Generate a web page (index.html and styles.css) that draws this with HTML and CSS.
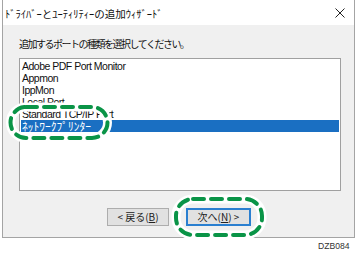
FILE: index.html
```html
<!DOCTYPE html>
<html lang="ja">
<head>
<meta charset="utf-8">
<link rel="stylesheet" href="styles.css">
</head>
<body>
<div class="page">
  <div class="window">
    <div class="titlebar">
      <span class="title">ﾄﾞﾗｲﾊﾞｰとﾕｰﾃｨﾘﾃｨｰの追加ｳｨｻﾞｰﾄﾞ</span>
      <svg class="close" width="10" height="10" viewBox="0 0 10 10"><path d="M0.5 0.5L9.5 9.5M9.5 0.5L0.5 9.5" stroke="#222" stroke-width="1"/></svg>
    </div>
    <div class="content">
      <div class="label">追加するポートの種類を選択してください。</div>
      <div class="listbox">
        <div class="item">Adobe PDF Port Monitor</div>
        <div class="item">Appmon</div>
        <div class="item">IppMon</div>
        <div class="item">Local Port</div>
        <div class="item">Standard TCP/IP Port</div>
        <div class="item selected">ﾈｯﾄﾜｰｸﾌﾟﾘﾝﾀｰ</div>
      </div>
      <div class="buttons">
        <div class="btn">&lt; 戻る(<u>B</u>)</div>
        <div class="btn primary">次へ(<u>N</u>) &gt;</div>
      </div>
    </div>
  </div>
  <div class="caption">DZB084</div>
  <svg class="marks" width="357" height="255" viewBox="0 0 357 255">
    <rect x="10.5" y="107" width="97" height="31" rx="15.5" fill="none" stroke="#fff" stroke-width="9"/>
    <rect x="10.5" y="107" width="97" height="31" rx="15.5" fill="none" stroke="#0a9447" stroke-width="4" stroke-dasharray="11 7" stroke-linecap="round"/>
    <rect x="176" y="199" width="86" height="36" rx="17" fill="none" stroke="#fff" stroke-width="9"/>
    <rect x="176" y="199" width="86" height="36" rx="17" fill="none" stroke="#0a9447" stroke-width="4" stroke-dasharray="11 7" stroke-linecap="round"/>
  </svg>
</div>
</body>
</html>
```
FILE: styles.css
```css
* { box-sizing: border-box; }
html, body { margin: 0; padding: 0; background: #fff; }
body {
  width: 357px;
  height: 255px;
  overflow: hidden;
  font-family: "Noto Sans", "Noto Sans CJK JP", sans-serif;
  color: #000;
}
.page { position: relative; width: 357px; height: 255px; }
.window {
  margin-left: 2px;
  width: 353px;
  height: 238px;
  border: 1px solid #a4a4a4;
  border-top: none;
  background: #f0f0f0;
  display: flex;
  flex-direction: column;
}
.titlebar {
  height: 25px;
  background: #fff;
  display: flex;
  align-items: center;
  justify-content: space-between;
  padding: 0 9px 0 2px;
}
.title {
  font-family: "Noto Sans CJK JP", sans-serif;
  font-size: 10.5px;
  color: #111;
  padding-top: 1px;
}
.close { display: block; margin-top: 1px; }
.content {
  flex: 1;
  padding: 12px 13px 0 16px;
  display: flex;
  flex-direction: column;
}
.label {
  font-family: "Noto Sans CJK JP", sans-serif;
  font-size: 10px;
  letter-spacing: -1.5px;
  line-height: 14px;
  height: 21px;
  color: #111;
  white-space: nowrap;
}
.listbox {
  height: 133px;
  background: #fff;
  border: 1px solid #a0a0a0;
  padding: 1px 1px 0 1px;
}
.item {
  height: 12px;
  line-height: 12px;
  font-size: 10.5px;
  padding-left: 1px;
  color: #111;
  white-space: nowrap;
  font-family: "Liberation Sans", "Noto Sans CJK JP", sans-serif;
  letter-spacing: -0.5px;
}
.item.selected {
  background: #1a6fc2;
  color: #fff;
  font-family: "Noto Sans CJK JP", sans-serif;
  font-size: 11.5px;
  letter-spacing: 0;
}
.buttons {
  display: flex;
  gap: 17px;
  padding-left: 88px;
  margin-top: 17px;
}
.btn {
  height: 18px;
  width: 62px;
  background: #e1e1e1;
  border: 1px solid #adadad;
  font-family: "Noto Sans CJK JP", sans-serif;
  font-size: 10px;
  line-height: 16px;
  text-align: center;
  color: #222;
}
.btn.primary {
  width: 65px;
  border: 2px solid #2a7fd0;
  line-height: 14px;
}
.btn u { text-decoration: underline; }
.caption {
  position: absolute;
  left: 318px;
  top: 241px;
  font-family: "Liberation Sans", sans-serif;
  font-size: 8.6px;
  color: #333;
}
.marks { position: absolute; left: 0; top: 0; pointer-events: none; }
```
